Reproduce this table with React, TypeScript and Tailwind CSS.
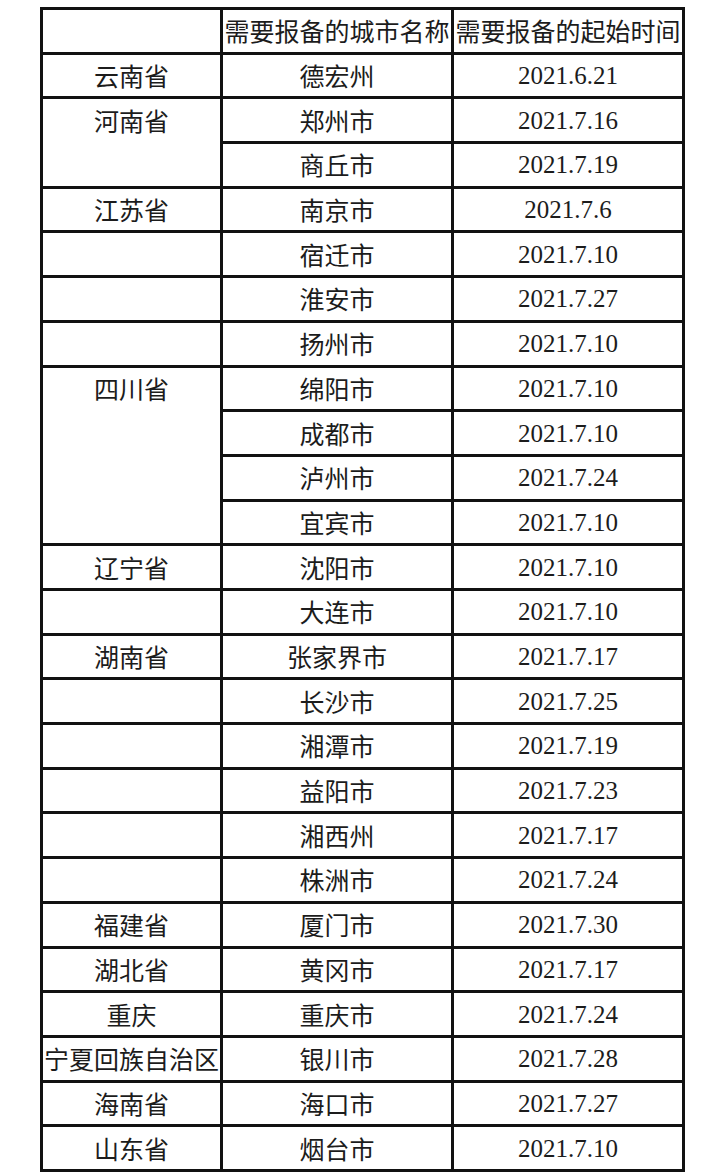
type Row = { province?: string; span?: number; city: string; date: string };

const rows: Row[] = [
  { province: "云南省", city: "德宏州", date: "2021.6.21" },
  { province: "河南省", span: 2, city: "郑州市", date: "2021.7.16" },
  { city: "商丘市", date: "2021.7.19" },
  { province: "江苏省", city: "南京市", date: "2021.7.6" },
  { province: "", city: "宿迁市", date: "2021.7.10" },
  { province: "", city: "淮安市", date: "2021.7.27" },
  { province: "", city: "扬州市", date: "2021.7.10" },
  { province: "四川省", span: 4, city: "绵阳市", date: "2021.7.10" },
  { city: "成都市", date: "2021.7.10" },
  { city: "泸州市", date: "2021.7.24" },
  { city: "宜宾市", date: "2021.7.10" },
  { province: "辽宁省", city: "沈阳市", date: "2021.7.10" },
  { province: "", city: "大连市", date: "2021.7.10" },
  { province: "湖南省", city: "张家界市", date: "2021.7.17" },
  { province: "", city: "长沙市", date: "2021.7.25" },
  { province: "", city: "湘潭市", date: "2021.7.19" },
  { province: "", city: "益阳市", date: "2021.7.23" },
  { province: "", city: "湘西州", date: "2021.7.17" },
  { province: "", city: "株洲市", date: "2021.7.24" },
  { province: "福建省", city: "厦门市", date: "2021.7.30" },
  { province: "湖北省", city: "黄冈市", date: "2021.7.17" },
  { province: "重庆", city: "重庆市", date: "2021.7.24" },
  { province: "宁夏回族自治区", city: "银川市", date: "2021.7.28" },
  { province: "海南省", city: "海口市", date: "2021.7.27" },
  { province: "山东省", city: "烟台市", date: "2021.7.10" },
];

const cjk = "font-['Noto_Sans_CJK_SC',sans-serif]";
const serif = "font-['Liberation_Serif','Times_New_Roman',serif]";

export default function App() {
  return (
    <div className="min-h-[1175px] w-[720px] bg-white pl-[40px] pt-[7px]">
      <div className="grid h-[1165px] w-[645px] grid-cols-[177px_228px_228px] grid-rows-[repeat(26,minmax(0,1fr))] gap-[3px] bg-[#111] p-[3px] text-[25px] leading-none text-[#1c1c1c]">
        <div className="bg-white" />
        <div className={`flex items-center justify-center whitespace-nowrap bg-white ${cjk}`}>
          需要报备的城市名称
        </div>
        <div className={`flex items-center justify-center whitespace-nowrap bg-white ${cjk}`}>
          需要报备的起始时间
        </div>
        {rows.map((r, i) => (
          <Cells key={i} row={r} />
        ))}
      </div>
    </div>
  );
}

function Cells({ row }: { row: Row }) {
  const spanClass = row.span === 4 ? "row-span-4" : row.span === 2 ? "row-span-2" : "";
  return (
    <>
      {row.province !== undefined && (
        <div className={`flex flex-col bg-white ${spanClass} ${cjk}`}>
          <div className="flex h-[41.7px] items-center justify-center whitespace-nowrap">
            {row.province}
          </div>
        </div>
      )}
      <div className={`flex items-center justify-center bg-white ${cjk}`}>{row.city}</div>
      <div className={`flex items-center justify-center bg-white ${serif}`}>{row.date}</div>
    </>
  );
}
